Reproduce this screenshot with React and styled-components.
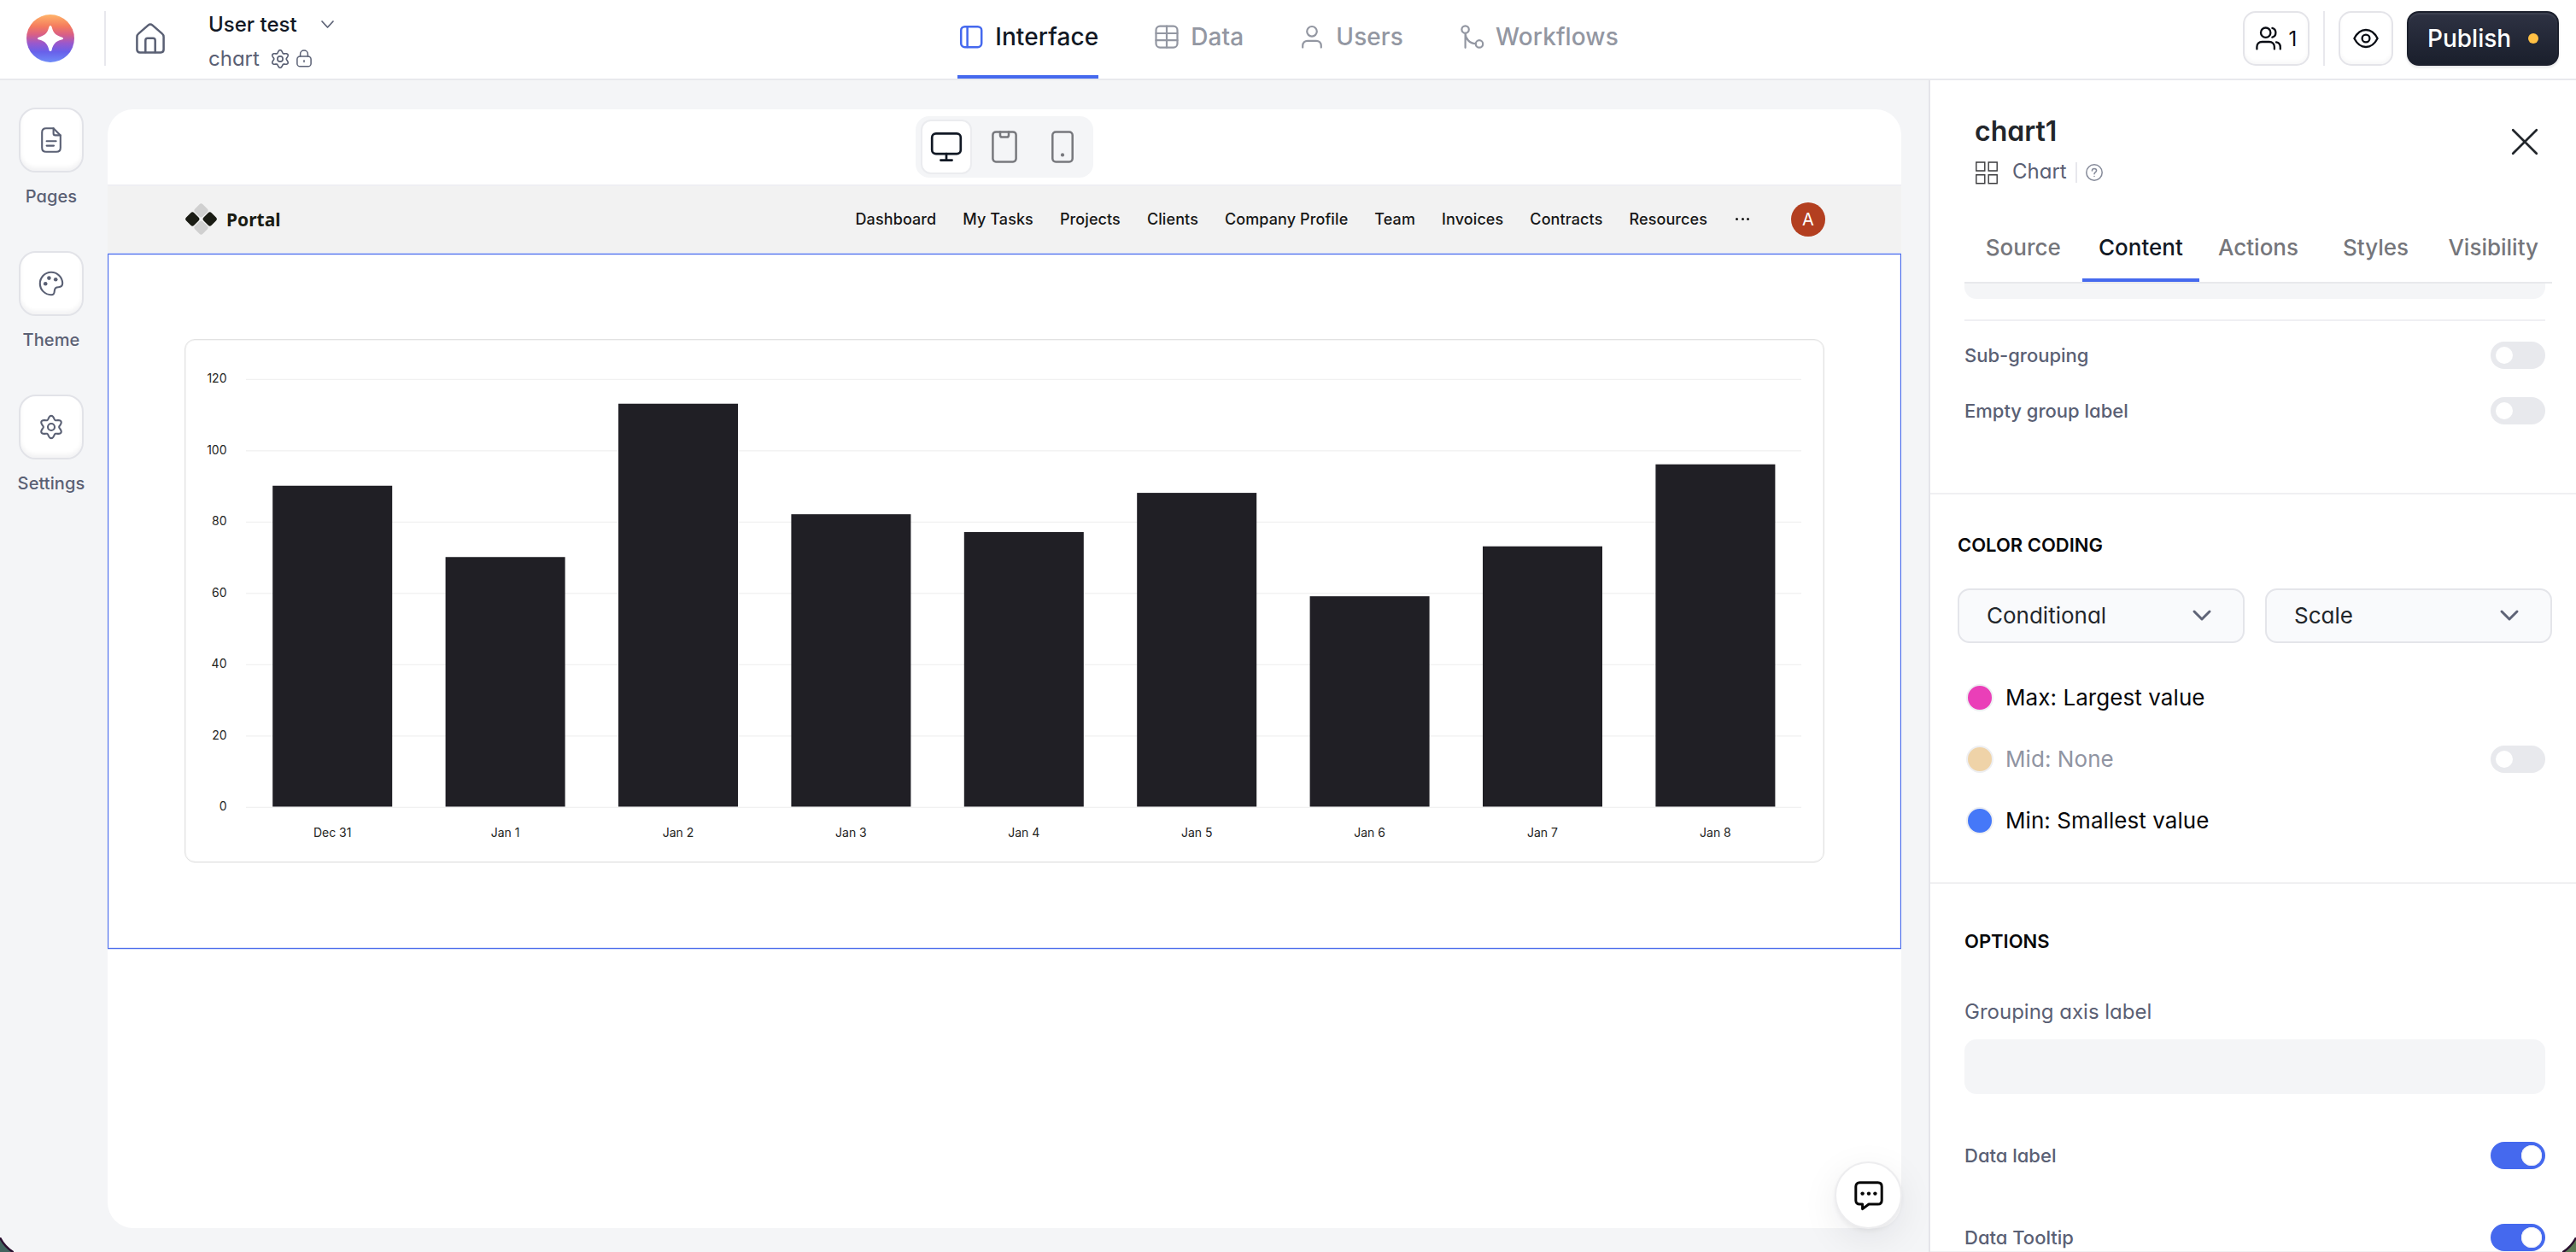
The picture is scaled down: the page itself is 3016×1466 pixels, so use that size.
import React from "react";
import styled, { createGlobalStyle, css } from "styled-components";

const GlobalStyle = createGlobalStyle`
  *, *::before, *::after { box-sizing: border-box; }
  html, body { margin: 0; padding: 0; overflow: hidden; }
  body { font-family: Inter, "Liberation Sans", sans-serif; background: #f4f5f7; -webkit-font-smoothing: antialiased; }
`;

const INK = "#111824";
const SLATE = "#5a6074";
const BLUE = "#4569ee";

const roundA = css`
  font-feature-settings: "cv11" 1;
`;

/* ---------- icons ---------- */

const Icon = styled.svg`
  display: block;
  flex: none;
  fill: none;
  stroke: currentColor;
  stroke-width: ${(p) => p.$stroke || 2.2};
  stroke-linecap: round;
  stroke-linejoin: ${(p) => p.$join || "round"};
  overflow: visible;
`;

function cogPath(c, base, wave) {
  const points = [];
  for (let i = 0; i < 120; i++) {
    const a = (i / 120) * Math.PI * 2;
    const r = base - wave * Math.cos(6 * a);
    points.push(`${(c + r * Math.cos(a)).toFixed(2)} ${(c + r * Math.sin(a)).toFixed(2)}`);
  }
  return `M${points.join("L")}Z`;
}

const BrandMark = () => (
  <svg width="56" height="56" viewBox="0 0 56 56">
    <defs>
      <linearGradient id="brand" x1="0" y1="0" x2="0" y2="1">
        <stop offset="0" stopColor="#ffb469" />
        <stop offset="0.25" stopColor="#f47b5e" />
        <stop offset="0.42" stopColor="#d95f86" />
        <stop offset="0.6" stopColor="#9a58cc" />
        <stop offset="0.78" stopColor="#6860ea" />
        <stop offset="1" stopColor="#6f8cf8" />
      </linearGradient>
    </defs>
    <circle cx="28" cy="28" r="28" fill="url(#brand)" />
    <path
      d="M28 13C28.8 13 29.3 13.6 29.6 14.6C31.3 21.3 33.9 24.4 41 26.4C42.4 26.8 43 27.3 43 28C43 28.7 42.4 29.2 41 29.6C33.9 31.6 31.3 34.7 29.6 41.4C29.3 42.4 28.8 43 28 43C27.2 43 26.7 42.4 26.4 41.4C24.7 34.7 22.1 31.6 15 29.6C13.6 29.2 13 28.7 13 28C13 27.3 13.6 26.8 15 26.4C22.1 24.4 24.7 21.3 26.4 14.6C26.7 13.6 27.2 13 28 13Z"
      fill="#fff"
    />
  </svg>
);

const HomeIcon = () => (
  <Icon width="34" height="36" viewBox="0 0 34 36" $stroke={2.5}>
    <path d="M1.4 16.2C1.4 14.6 2 13.4 3.2 12.4L14.4 2.6C16 1.2 18 1.2 19.6 2.6L30.8 12.4C32 13.4 32.6 14.6 32.6 16.2V31C32.6 33.2 31.2 34.4 29.2 34.4H4.8C2.8 34.4 1.4 33.2 1.4 31Z" />
    <path d="M11.3 34V20.4C11.3 18.8 12.3 17.8 13.8 17.8H20.2C21.7 17.8 22.7 18.8 22.7 20.4V34" />
  </Icon>
);

const CogIcon = ({ size, stroke }) => (
  <Icon width={size} height={size} viewBox="0 0 28 28" $stroke={stroke}>
    <path d={cogPath(14, 11.2, 2)} />
    <circle cx="14" cy="14" r="4" />
  </Icon>
);

const LockIcon = () => (
  <Icon width="18" height="21" viewBox="0 0 18 21" $stroke={1.5}>
    <rect x="0.9" y="8" width="16.2" height="11.8" rx="3.4" />
    <path d="M4.6 8V5.2C4.6 2.8 6.5 1 9 1S13.4 2.8 13.4 5.2V8" />
    <path d="M9 12.8V14.6" />
  </Icon>
);

const Chevron = ({ w, h, stroke }) => (
  <Icon width={w} height={h} viewBox={`0 0 ${w} ${h}`} $stroke={stroke}>
    <path d={`M1 1L${w / 2} ${h - 1}L${w - 1} 1`} />
  </Icon>
);

const LayoutIcon = () => (
  <Icon width="32" height="32" viewBox="0 0 32 32" $stroke={2.5}>
    <rect x="4.2" y="4.2" width="24" height="24" rx="4.4" />
    <path d="M11.6 4.4V28" />
  </Icon>
);

const TableIcon = () => (
  <Icon width="32" height="32" viewBox="0 0 32 32" $stroke={2.2}>
    <rect x="3.5" y="3.6" width="25" height="25" rx="4.6" />
    <path d="M16 3.6V28.6M3.5 12H28.5M3.5 20.2H28.5" />
  </Icon>
);

const UserIcon = () => (
  <Icon width="32" height="32" viewBox="0 0 32 32" $stroke={2.2}>
    <circle cx="16" cy="9.8" r="5.8" />
    <path d="M5.2 28.6V26.6C5.2 23 7.6 20.8 11 20.8H21C24.4 20.8 26.8 23 26.8 26.6V28.6" />
  </Icon>
);

const FlowIcon = () => (
  <Icon width="32" height="32" viewBox="0 0 32 32" $stroke={2.2}>
    <circle cx="8.6" cy="7.6" r="4.2" />
    <circle cx="25" cy="24.4" r="4.2" />
    <path d="M8.6 11.8V28.8M8.6 12C8.8 18.5 13.5 23.8 20.8 24.2" />
  </Icon>
);

const TeamIcon = () => (
  <Icon width="30" height="28" viewBox="0 0 30 28" $stroke={2.3}>
    <circle cx="11.7" cy="7.2" r="5.7" />
    <path d="M1.4 26.4V24C1.4 20.3 3.8 18 7.4 18H15.8C19.4 18 21.9 20.3 21.9 24V26.4" />
    <path d="M19.4 1.9C21.8 2.6 23.4 4.7 23.4 7.2S21.8 11.9 19.4 12.6M24 18.4C27 19 28.8 21.1 28.8 24.2V26.4" />
  </Icon>
);

const EyeIcon = () => (
  <Icon width="30" height="24" viewBox="0 0 30 24" $stroke={2.3}>
    <path d="M1.4 12C4.8 5.4 9.5 2 15 2S25.2 5.4 28.6 12C25.2 18.6 20.5 22 15 22S4.8 18.6 1.4 12Z" />
    <circle cx="15" cy="12" r="4.4" />
  </Icon>
);

const PageIcon = () => (
  <Icon width="24" height="30" viewBox="0 0 24 30" $stroke={2.1}>
    <path d="M6 1.2H14.6L22.8 9.4V24C22.8 27 21 28.8 18 28.8H6C3 28.8 1.2 27 1.2 24V6C1.2 3 3 1.2 6 1.2Z" />
    <path d="M14.6 1.4V7.2C14.6 8.6 15.4 9.4 16.8 9.4H22.6M6.6 16.2H17.6M6.6 21.6H15" />
  </Icon>
);

const PaletteIcon = () => (
  <Icon width="28" height="28" viewBox="0 0 28 28" $stroke={2.1}>
    <path d="M14 27.2A13.2 13.2 0 1 1 27.2 13.6C27.2 17 25.6 18.2 22.4 18.2C19 18.2 18 19.6 17.8 22.6C17.6 26 16.8 27.2 14 27.2Z" />
    <g fill="currentColor" stroke="none">
      <circle cx="11.4" cy="7.6" r="2.3" />
      <circle cx="19.2" cy="9.2" r="2.3" />
      <circle cx="7.2" cy="14.2" r="2.3" />
    </g>
  </Icon>
);

const DesktopIcon = () => (
  <Icon width="36" height="34" viewBox="0 0 36 34" $stroke={2.7}>
    <rect x="1.2" y="1.4" width="33.6" height="23.8" rx="4.6" />
    <path d="M18 25.2V32.2M11.4 32.6H24.6" />
  </Icon>
);

const TabletIcon = () => (
  <Icon width="30" height="38" viewBox="0 0 30 38" $stroke={2.5}>
    <rect x="1.4" y="1.4" width="27.2" height="35" rx="3.6" />
    <path d="M10 1.6V5.2C10 6.8 10.8 7.6 12.2 7.6H17.8C19.2 7.6 20 6.8 20 5.2V1.6" />
  </Icon>
);

const PhoneIcon = () => (
  <Icon width="26" height="38" viewBox="0 0 26 38" $stroke={2.5}>
    <rect x="1.3" y="1.4" width="23.4" height="35" rx="3.8" />
    <circle cx="13" cy="28.4" r="2.1" fill="currentColor" stroke="none" />
  </Icon>
);

const PortalMark = () => (
  <svg width="37" height="37" viewBox="0 0 37 37">
    {[
      [18.5, 8.4, "#d0d0d0"],
      [18.5, 28.6, "#d0d0d0"],
      [8.3, 18.5, "#1a1c14"],
      [28.7, 18.5, "#1a1c14"],
    ].map(([x, y, fill]) => (
      <rect
        key={`${x}-${y}`}
        x={x - 6.5}
        y={y - 6.5}
        width="13"
        height="13"
        rx="2.8"
        fill={fill}
        transform={`rotate(45 ${x} ${y})`}
      />
    ))}
  </svg>
);

const TilesIcon = () => (
  <Icon width="26" height="27" viewBox="0 0 26 27" $stroke={1.4} $join="miter">
    <path d="M0.8 1H10.8V11H0.8ZM15.2 1H25.2V11H15.2ZM0.8 15.8H10.8V25.8H0.8ZM15.2 15.8H25.2V25.8H15.2Z" />
  </Icon>
);

const HelpIcon = () => (
  <Icon width="20" height="20" viewBox="0 0 20 20" $stroke={1.5}>
    <circle cx="10" cy="10" r="9.2" />
    <path d="M7.4 8C7.4 6.4 8.5 5.4 10 5.4S12.6 6.4 12.6 7.8C12.6 9.6 10 9.8 10 11.8M10 14.4V14.6" />
  </Icon>
);

const CloseIcon = () => (
  <Icon width="30" height="30" viewBox="0 0 30 30" $stroke={2.7}>
    <path d="M1.2 1.2L28.8 28.8M28.8 1.2L1.2 28.8" />
  </Icon>
);

const ChatIcon = () => (
  <Icon width="34" height="34" viewBox="0 0 34 34" $stroke={3}>
    <path d="M6.4 1.8H27.6C30.6 1.8 32.2 3.4 32.2 6.4V22.4C32.2 25.4 30.6 27 27.6 27H17L9.6 32.6V27H6.4C3.4 27 1.8 25.4 1.8 22.4V6.4C1.8 3.4 3.4 1.8 6.4 1.8Z" />
    <g fill="currentColor" stroke="none">
      <circle cx="9.6" cy="14.6" r="2.2" />
      <circle cx="17" cy="14.6" r="2.2" />
      <circle cx="24.4" cy="14.6" r="2.2" />
    </g>
  </Icon>
);

/* ---------- shell & header ---------- */

const Shell = styled.div`
  position: relative;
  display: flex;
  flex-direction: column;
  width: 3016px;
  height: 1466px;
  overflow: hidden;
  background: #f4f5f7;
  white-space: nowrap;
`;

const Header = styled.header`
  display: grid;
  grid-template-columns: 1fr auto 1fr;
  flex: none;
  height: 94px;
  background: #fff;
  border-bottom: 2px solid #e8e9ed;
`;

const HeaderLeft = styled.div`
  display: flex;
  align-items: center;
  height: 90px;
  padding-left: 31px;
  color: ${SLATE};
`;

const Rule = styled.span`
  flex: none;
  width: 2px;
  height: ${(p) => p.$h}px;
  margin: 0 ${(p) => p.$mr}px 0 ${(p) => p.$ml}px;
  background: #e8e8ed;
`;

const ProjectInfo = styled.div`
  margin: 7px 0 0 51px;
`;

const ProjectLine = styled.div`
  ${roundA}
  display: flex;
  align-items: center;
  height: 40px;
  gap: ${(p) => p.$gap}px;
  font-size: 24px;
  font-weight: ${(p) => p.$weight};
  color: ${(p) => p.$color};
`;

const MutedIcon = styled.span`
  display: flex;
  color: ${SLATE};
`;

const LineIcons = styled.span`
  display: flex;
  align-items: center;
  gap: 8px;
`;

const TopTabs = styled.nav`
  display: flex;
  gap: 64px;
  height: 92px;
`;

const TopTab = styled.a`
  display: flex;
  align-items: center;
  gap: 12px;
  padding-bottom: 2px;
  border-bottom: 4px solid ${(p) => (p.$active ? BLUE : "transparent")};
  font-size: 28px;
  font-weight: 500;
  letter-spacing: 0.1px;
  color: ${(p) => (p.$active ? INK : "#9397a2")};

  svg {
    color: ${(p) => (p.$active ? BLUE : "#9397a2")};
  }
`;

const HeaderRight = styled.div`
  display: flex;
  align-items: center;
  justify-content: flex-end;
  height: 90px;
  padding-right: 20px;
`;

const HeaderButton = styled.button`
  display: flex;
  align-items: center;
  justify-content: center;
  gap: 9px;
  width: ${(p) => p.$w}px;
  height: 64px;
  padding: 0;
  border: 2px solid #e4e4e9;
  border-radius: 15px;
  background: #fff;
  box-shadow: inset 0 -3px 4px rgba(20, 24, 40, 0.03);
  font: 400 24px Inter, sans-serif;
  color: #0a0d14;
`;

const PublishButton = styled.button`
  display: flex;
  align-items: center;
  justify-content: space-between;
  width: 178px;
  height: 64px;
  margin-left: 16px;
  padding: 0 24px 0 22px;
  border: 2px solid #1c202d;
  border-radius: 14px;
  background: linear-gradient(#2e3243, #1a1f2c);
  box-shadow: inset 0 2px 2px rgba(255, 255, 255, 0.08), 0 2px 3px rgba(20, 24, 40, 0.12);
  font: 500 28px Inter, sans-serif;
  color: #fff;
`;

const Dot = styled.span`
  width: 12px;
  height: 12px;
  margin-right: -2px;
  border-radius: 50%;
  background: #ffc044;
`;

/* ---------- sidebar ---------- */

const Body = styled.div`
  display: flex;
  flex: 1;
  min-height: 0;
`;

const Sidebar = styled.aside`
  display: flex;
  flex-direction: column;
  align-items: center;
  gap: 44px;
  width: 126px;
  padding: 32px 6px 0 0;
`;

const SideItem = styled.div`
  display: flex;
  flex-direction: column;
  align-items: center;
  color: ${SLATE};
`;

const SideButton = styled.button`
  display: grid;
  place-items: center;
  width: 76px;
  height: 76px;
  padding: 0;
  border: 2px solid #e2e3e8;
  border-radius: 20px;
  background: #fff;
  box-shadow: inset 0 -4px 5px rgba(20, 24, 40, 0.05);
  color: inherit;
`;

const SideLabel = styled.span`
  ${roundA}
  margin-top: 8px;
  font-size: 20px;
  font-weight: 500;
  line-height: 40px;
  letter-spacing: 0.1px;
`;

/* ---------- canvas ---------- */

const Workspace = styled.main`
  display: flex;
  flex: 1;
  padding: 34px 32px 28px 0;
`;

const Canvas = styled.section`
  flex: 1;
  overflow: hidden;
  border-radius: 30px;
  background: #fff;
`;

const Toolbar = styled.div`
  display: flex;
  align-items: center;
  justify-content: center;
  height: 88px;
`;

const DeviceSwitch = styled.div`
  display: flex;
  gap: 8px;
  padding: 4px 6px;
  border-radius: 16px;
  background: #f4f5f7;
`;

const DeviceButton = styled.button`
  display: grid;
  place-items: center;
  width: 60px;
  height: 64px;
  padding: 0;
  border: 2px solid ${(p) => (p.$active ? "#ebecef" : "transparent")};
  border-radius: 12px;
  background: ${(p) => (p.$active ? "#fff" : "transparent")};
  color: ${(p) => (p.$active ? INK : "#77787d")};
`;

const PortalBar = styled.div`
  display: flex;
  align-items: center;
  height: 81px;
  padding: 0 89px 2px 91px;
  border-top: 2px solid #efeff3;
  background: #f2f2f2;
`;

const PortalName = styled.span`
  margin-left: 11px;
  font: 700 21px "Noto Sans", sans-serif;
  color: #1a1c14;
`;

const PortalNav = styled.nav`
  display: flex;
  align-items: center;
  gap: 31px;
  margin-left: auto;
  font-size: 18px;
  font-weight: 500;
  letter-spacing: 0.1px;
  color: #161616;
`;

const Ellipsis = styled.span`
  display: flex;
  gap: 3.5px;
  margin: 0 18px 0 2px;

  i {
    width: 3px;
    height: 3px;
    border-radius: 50%;
    background: #161616;
  }
`;

const Avatar = styled.span`
  display: grid;
  place-items: center;
  width: 40px;
  height: 40px;
  border-radius: 50%;
  background: #b33f20;
  font-size: 20px;
  font-weight: 400;
  color: #fff;
`;

const Selection = styled.div`
  height: 814px;
  padding: 99px 89px;
  border: 1px solid #4b6cec;
  box-shadow: 0 0 0 1px #d3dcfa, inset 0 0 0 1px #e4e9fc;
`;

const ChartCard = styled.div`
  height: 613px;
  border: 1px solid #e2e2e2;
  border-radius: 12px;
  box-shadow: inset 0 0 0 1px #f5f5f5;
`;

const ChartSvg = styled.svg`
  display: block;
  font-family: Inter, sans-serif;
  font-size: 14px;
  fill: #26261f;
`;

/* ---------- right panel ---------- */

const Panel = styled.aside`
  flex: none;
  width: 758px;
  overflow: hidden;
  border-left: 2px solid #e5e5ea;
  background: #fff;
`;

const PanelHead = styled.div`
  display: flex;
  align-items: flex-start;
  justify-content: space-between;
  height: 156px;
  padding: 38px 45px 0 52px;
  color: #22262b;
`;

const PanelTitle = styled.h1`
  ${roundA}
  margin: 0 0 11px;
  font-size: 32px;
  font-weight: 600;
  line-height: 44px;
`;

const PanelMeta = styled.div`
  ${roundA}
  display: flex;
  align-items: center;
  height: 30px;
  margin-left: 1px;
  font-size: 24px;
  line-height: 28px;
  color: ${SLATE};
`;

const MetaText = styled.span`
  padding-bottom: 2px;
`;

const MetaIcon = styled.span`
  display: flex;
  margin-right: ${(p) => p.$mr || 0}px;
  color: ${(p) => p.$color};
`;

const CloseButton = styled.button`
  margin: 19px 0 0;
  padding: 0;
  border: 0;
  background: none;
  color: inherit;
`;

const PanelTabs = styled.nav`
  display: grid;
  grid-template-columns: repeat(5, 1fr);
  height: 82px;
  margin: 0 28px 0 40px;
  border-bottom: 2px solid #e8e9ec;
`;

const PanelTab = styled.a`
  display: flex;
  align-items: center;
  justify-content: center;
  padding-bottom: 2px;
  font-size: 26px;
  font-weight: 500;
  color: ${(p) => (p.$active ? INK : "#75767b")};
  box-shadow: ${(p) => (p.$active ? `inset 0 -4px ${BLUE}` : "none")};
`;

const Section = styled.section`
  padding: ${(p) => p.$pad};
  border-bottom: 2px solid #f0f0f2;
`;

const ScrolledField = styled.div`
  height: 18px;
  border-radius: 0 0 14px 14px;
  background: #f4f5f7;
`;

const Divider = styled.div`
  height: 2px;
  margin: 24px 0;
  background: #efeff3;
`;

const Stack = styled.div`
  display: flex;
  flex-direction: column;
  gap: ${(p) => p.$gap}px;
`;

const SettingRow = styled.div`
  ${roundA}
  display: flex;
  align-items: center;
  justify-content: space-between;
  height: 32px;
  font-size: 22px;
  font-weight: 500;
  color: ${SLATE};
`;

const Toggle = styled.span`
  display: flex;
  align-items: center;
  justify-content: ${(p) => (p.$on ? "flex-end" : "flex-start")};
  width: 64px;
  height: 32px;
  margin-left: auto;
  padding: 0 ${(p) => (p.$on ? 4 : 6)}px;
  border-radius: 16px;
  background: ${(p) => (p.$on ? BLUE : "#e8e9ed")};

  &::after {
    content: "";
    width: ${(p) => (p.$on ? 24 : 20)}px;
    height: ${(p) => (p.$on ? 24 : 20)}px;
    border-radius: 50%;
    background: #fff;
    box-shadow: ${(p) => (p.$on ? "inset 0 0 0 1px #eceef6" : "none")};
  }
`;

const SectionTitle = styled.h2`
  margin: 0;
  font-size: 22px;
  font-weight: 600;
  line-height: 30px;
  color: #08080a;
`;

const SelectRow = styled.div`
  display: grid;
  grid-template-columns: 1fr 1fr;
  gap: 24px;
  margin: 36px 0 48px;
`;

const Select = styled.button`
  ${roundA}
  display: flex;
  align-items: center;
  justify-content: space-between;
  height: 64px;
  padding: 0 38px 1px 32px;
  border: 2px solid #e4e5ea;
  border-radius: 14px;
  background: #f9fafc;
  font-family: Inter, sans-serif;
  font-size: 26px;
  font-weight: 400;
  color: #22262b;

  svg {
    color: #5f6477;
  }
`;

const ColorRow = styled.div`
  display: flex;
  align-items: center;
  height: 32px;
  padding: 0 8px 0 10px;
  font-size: 26px;
  letter-spacing: 0.07px;
  color: ${(p) => (p.$muted ? "#9094a2" : "#08080a")};
`;

const ColorText = styled.span`
  padding-bottom: 2px;
`;

const Swatch = styled.span`
  width: 32px;
  height: 32px;
  margin-right: 14px;
  border: 2px solid #eeeff2;
  border-radius: 50%;
  background: ${(p) => p.$color};
`;

const FieldLabel = styled.label`
  ${roundA}
  display: block;
  margin-top: 53px;
  font-size: 24px;
  line-height: 30px;
  color: ${SLATE};
`;

const Field = styled.div`
  height: 64px;
  margin: 17px 0 56px;
  border-radius: 14px;
  background: #f4f5f7;
`;

/* ---------- overlays ---------- */

const ChatButton = styled.button`
  position: absolute;
  left: 2148px;
  bottom: 27px;
  display: grid;
  place-items: center;
  width: 79px;
  height: 79px;
  padding: 0 0 0 1px;
  border: 2px solid #ededef;
  border-radius: 50%;
  background: #fff;
  box-shadow: 0 12px 44px rgba(20, 24, 40, 0.08), 0 3px 5px rgba(20, 24, 40, 0.05);
  color: #060606;
`;

const WindowCorner = styled.svg`
  position: absolute;
  bottom: 0;
  ${(p) => (p.$right ? "right: 0; transform: scaleX(-1);" : "left: 0;")}
`;

/* ---------- data ---------- */

const links = ["Dashboard", "My Tasks", "Projects", "Clients", "Company Profile", "Team", "Invoices", "Contracts", "Resources"];

const bars = [
  ["Dec 31", 90],
  ["Jan 1", 70],
  ["Jan 2", 113],
  ["Jan 3", 82],
  ["Jan 4", 77],
  ["Jan 5", 88],
  ["Jan 6", 59],
  ["Jan 7", 73],
  ["Jan 8", 96],
];

const plot = { left: 71, right: 1892, zero: 547, unit: 4.175, pitch: 202.4, bar: 140 };

function BarChart() {
  return (
    <ChartSvg width="1918" height="611" viewBox="0 0 1918 611">
      {[0, 20, 40, 60, 80, 100, 120].map((v) => {
        const y = plot.zero - v * plot.unit;
        return (
          <g key={v}>
            <rect x={plot.left} y={y - 0.3} width={plot.right - plot.left} height="1.3" fill="#f1f1f1" />
            <text x="48.5" y={y + 4} textAnchor="end">{v}</text>
          </g>
        );
      })}
      {bars.map(([label, v], i) => {
        const center = plot.left + plot.pitch * (i + 0.5);
        return (
          <g key={label}>
            <rect x={center - plot.bar / 2} y={plot.zero - v * plot.unit - 0.5} width={plot.bar} height={v * plot.unit} fill="#201f25" />
            <text x={center} y="582" textAnchor="middle">{label}</text>
          </g>
        );
      })}
    </ChartSvg>
  );
}

export default function App() {
  return (
    <Shell>
      <GlobalStyle />
      <Header>
        <HeaderLeft>
          <BrandMark />
          <Rule $h={64} $ml={35} $mr={35} />
          <HomeIcon />
          <ProjectInfo>
            <ProjectLine $weight={500} $color={INK} $gap={28}>
              User test
              <MutedIcon><Chevron w={15} h={9} stroke={1.7} /></MutedIcon>
            </ProjectLine>
            <ProjectLine $weight={400} $color={SLATE} $gap={13}>
              chart
              <LineIcons>
                <CogIcon size={22} stroke={2.1} />
                <LockIcon />
              </LineIcons>
            </ProjectLine>
          </ProjectInfo>
        </HeaderLeft>
        <TopTabs>
          <TopTab $active><LayoutIcon />Interface</TopTab>
          <TopTab><TableIcon />Data</TopTab>
          <TopTab><UserIcon />Users</TopTab>
          <TopTab><FlowIcon />Workflows</TopTab>
        </TopTabs>
        <HeaderRight>
          <HeaderButton $w={78}><TeamIcon />1</HeaderButton>
          <Rule $h={64} $ml={16} $mr={16} />
          <HeaderButton $w={64}><EyeIcon /></HeaderButton>
          <PublishButton>Publish<Dot /></PublishButton>
        </HeaderRight>
      </Header>

      <Body>
        <Sidebar>
          <SideItem><SideButton><PageIcon /></SideButton><SideLabel>Pages</SideLabel></SideItem>
          <SideItem><SideButton><PaletteIcon /></SideButton><SideLabel>Theme</SideLabel></SideItem>
          <SideItem><SideButton><CogIcon size={28} stroke={2.1} /></SideButton><SideLabel>Settings</SideLabel></SideItem>
        </Sidebar>

        <Workspace>
          <Canvas>
            <Toolbar>
              <DeviceSwitch>
                <DeviceButton $active><DesktopIcon /></DeviceButton>
                <DeviceButton><TabletIcon /></DeviceButton>
                <DeviceButton><PhoneIcon /></DeviceButton>
              </DeviceSwitch>
            </Toolbar>
            <PortalBar>
              <PortalMark />
              <PortalName>Portal</PortalName>
              <PortalNav>
                {links.map((link) => <span key={link}>{link}</span>)}
                <Ellipsis><i /><i /><i /></Ellipsis>
                <Avatar>A</Avatar>
              </PortalNav>
            </PortalBar>
            <Selection>
              <ChartCard><BarChart /></ChartCard>
            </Selection>
          </Canvas>
        </Workspace>

        <Panel>
          <PanelHead>
            <div>
              <PanelTitle>chart1</PanelTitle>
              <PanelMeta>
                <MetaIcon $mr={17} $color="#3a3a3c"><TilesIcon /></MetaIcon>
                <MetaText>Chart</MetaText>
                <Rule $h={24} $ml={10} $mr={10} />
                <MetaIcon $color="#858a99"><HelpIcon /></MetaIcon>
              </PanelMeta>
            </div>
            <CloseButton><CloseIcon /></CloseButton>
          </PanelHead>
          <PanelTabs>
            <PanelTab>Source</PanelTab>
            <PanelTab $active>Content</PanelTab>
            <PanelTab>Actions</PanelTab>
            <PanelTab>Styles</PanelTab>
            <PanelTab>Visibility</PanelTab>
          </PanelTabs>
          <Section $pad="0 36px 80px 40px">
            <ScrolledField />
            <Divider />
            <Stack $gap={33}>
              <SettingRow>Sub-grouping<Toggle /></SettingRow>
              <SettingRow>Empty group label<Toggle /></SettingRow>
            </Stack>
          </Section>
          <Section $pad="44px 28px 56px 32px">
            <SectionTitle>COLOR CODING</SectionTitle>
            <SelectRow>
              <Select>Conditional<Chevron w={20} h={11} stroke={3} /></Select>
              <Select>Scale<Chevron w={20} h={11} stroke={3} /></Select>
            </SelectRow>
            <Stack $gap={40}>
              <ColorRow><Swatch $color="#ea3fb8" /><ColorText>Max: Largest value</ColorText></ColorRow>
              <ColorRow $muted><Swatch $color="#efd3a8" /><ColorText>Mid: None</ColorText><Toggle /></ColorRow>
              <ColorRow><Swatch $color="#4578f8" /><ColorText>Min: Smallest value</ColorText></ColorRow>
            </Stack>
          </Section>
          <Section $pad="52px 36px 0 40px">
            <SectionTitle>OPTIONS</SectionTitle>
            <FieldLabel>Grouping axis label</FieldLabel>
            <Field />
            <Stack $gap={64}>
              <SettingRow>Data label<Toggle $on /></SettingRow>
              <SettingRow>Data Tooltip<Toggle $on /></SettingRow>
            </Stack>
          </Section>
        </Panel>
      </Body>

      <ChatButton><ChatIcon /></ChatButton>
      <WindowCorner width="16" height="17" viewBox="0 0 16 17">
        <path d="M0 0C3 7 8 13 15 17H0Z" fill="#42645f" />
        <path d="M-1 -2C2.5 6 8 12.5 16 17.5" fill="none" stroke="#2a1030" strokeWidth="2.4" />
      </WindowCorner>
      <WindowCorner $right width="16" height="17" viewBox="0 0 16 17">
        <path d="M0 0C3 7 8 13 15 17H0Z" fill="#5d7a55" />
        <path d="M-1 -2C2.5 6 8 12.5 16 17.5" fill="none" stroke="#2a1030" strokeWidth="2.4" />
      </WindowCorner>
    </Shell>
  );
}
